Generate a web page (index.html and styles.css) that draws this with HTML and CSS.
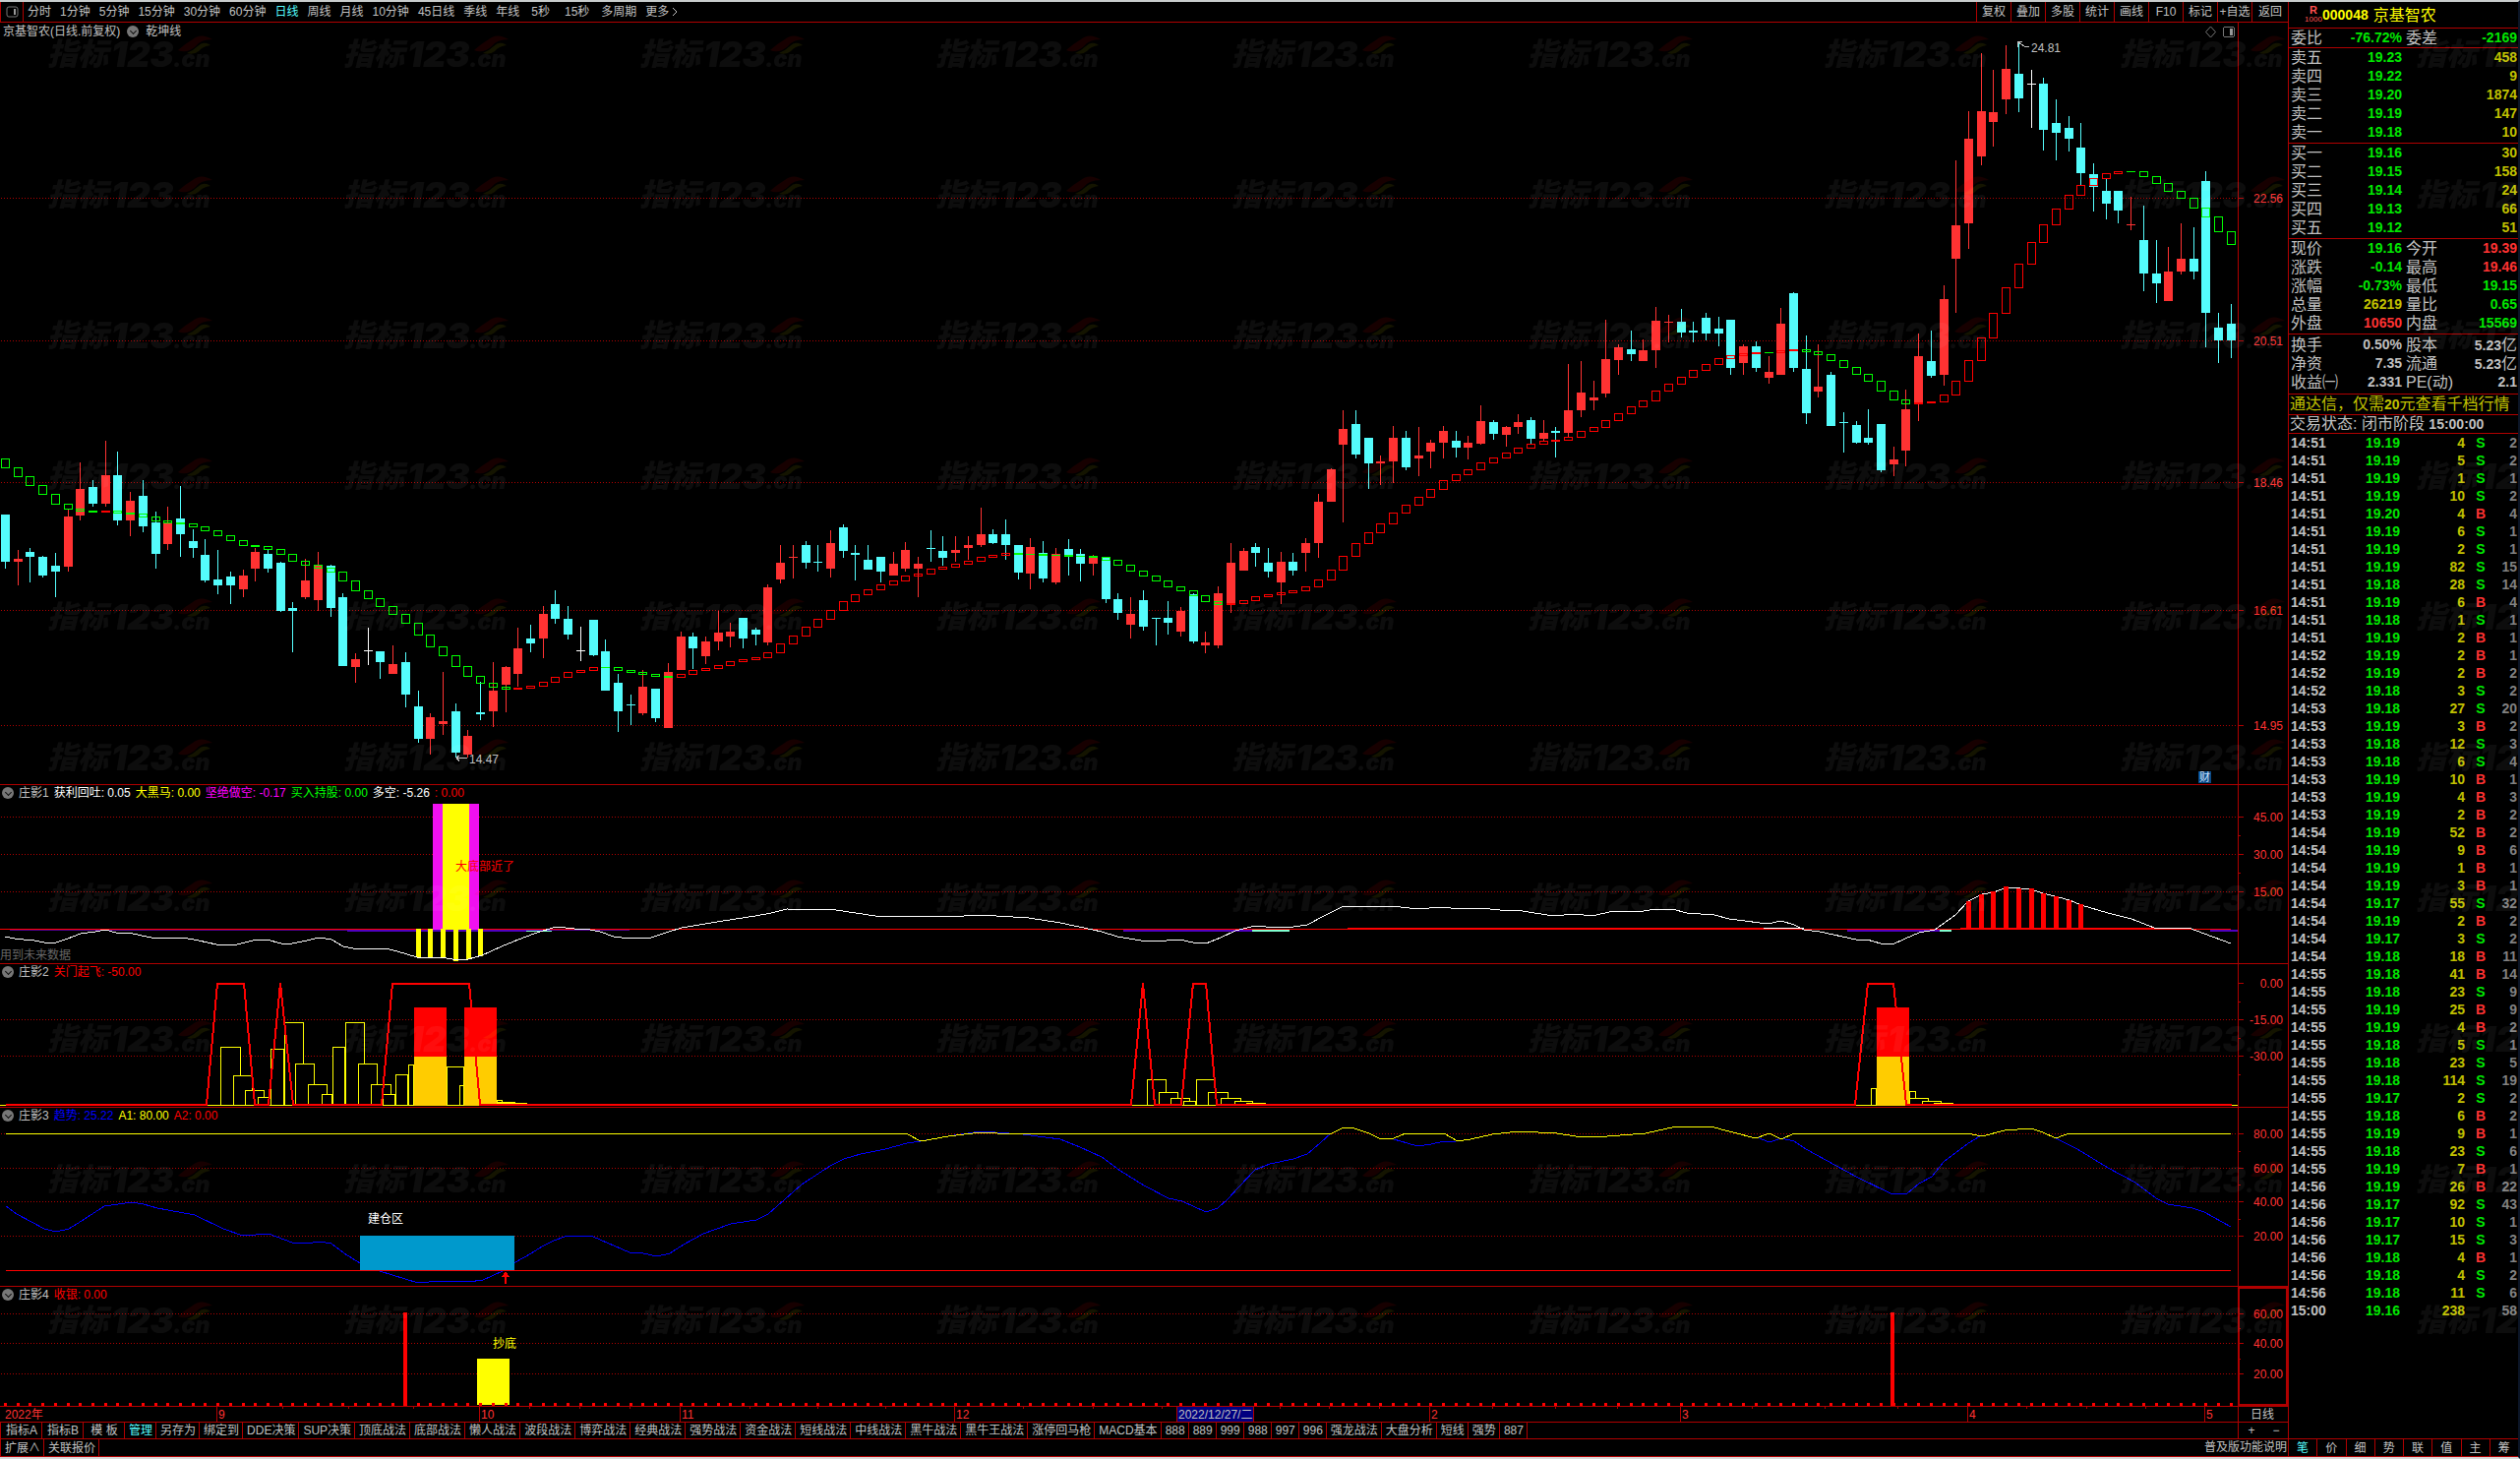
FILE: index.html
```html
<!DOCTYPE html>
<html lang="zh-CN">
<head>
<meta charset="utf-8">
<title>京基智农 000048</title>
<link rel="stylesheet" href="styles.css">
</head>
<body>
<div class="app">
  <main class="left">
    <nav class="toolbar">
      <button class="tool-icon" aria-label="侧栏"><svg width="13" height="12" viewBox="0 0 13 12"><rect x="1" y="1" width="11" height="10" rx="2" fill="none" stroke="#777"/><rect x="8" y="3" width="2" height="6" fill="#999"/></svg></button>
      <div class="periods">
        <button>分时</button><button>1分钟</button><button>5分钟</button><button>15分钟</button><button>30分钟</button><button>60分钟</button><button class="on">日线</button><button>周线</button><button>月线</button><button>10分钟</button><button>45日线</button><button>季线</button><button>年线</button><button class="sec">5秒</button><button class="sec">15秒</button><button>多周期</button><button class="more">更多<svg width="6" height="10" viewBox="0 0 6 10"><path d="M1 1L5 5L1 9" fill="none" stroke="#c0c0c0"/></svg></button>
      </div>
      <div class="actions">
        <button>复权</button><button>叠加</button><button>多股</button><button>统计</button><button>画线</button><button>F10</button><button>标记</button><button>+自选</button><button>返回</button>
      </div>
    </nav>

    <section class="panel">
      <header class="legend legend-main"><span>京基智农(日线.前复权)</span><i class="drop"></i><span>乾坤线</span></header>
      <svg id="price" class="chart" viewBox="0 23 2326 774"></svg>
    </section>
    <section class="panel">
      <header class="legend"><i class="drop"></i><span>庄影1</span><span class="white">获利回吐: 0.05</span><span class="yellow">大黑马: 0.00</span><span class="magenta">坚绝做空: -0.17</span><span class="green">买入持股: 0.00</span><span class="white">多空: -5.26</span><span class="red">: 0.00</span></header>
      <svg id="p1" class="chart" viewBox="0 798 2326 181"></svg>
    </section>
    <section class="panel">
      <header class="legend"><i class="drop"></i><span>庄影2</span><span class="red">关门起飞: -50.00</span></header>
      <svg id="p2" class="chart" viewBox="0 980 2326 145"></svg>
    </section>
    <section class="panel">
      <header class="legend"><i class="drop"></i><span>庄影3</span><span class="blue">趋势: 25.22</span><span class="yellow">A1: 80.00</span><span class="red">A2: 0.00</span></header>
      <svg id="p3" class="chart" viewBox="0 1126 2326 181"></svg>
    </section>
    <section class="panel">
      <header class="legend"><i class="drop"></i><span>庄影4</span><span class="red">收银: 0.00</span></header>
      <svg id="p4" class="chart" viewBox="0 1308 2326 121"></svg>
    </section>
    <section class="panel">
      <svg id="time" class="chart" viewBox="0 1430 2326 15"></svg>
    </section>

    <nav class="tabs">
      <button class="wide">指标A</button><button class="wide">指标B</button><button class="wide">模 板</button><button class="on">管理</button><button>另存为</button><button>绑定到</button><button>DDE决策</button><button>SUP决策</button><button>顶底战法</button><button>底部战法</button><button>懒人战法</button><button>波段战法</button><button>博弈战法</button><button>经典战法</button><button>强势战法</button><button>资金战法</button><button>短线战法</button><button>中线战法</button><button>黑牛战法</button><button>黑牛王战法</button><button>涨停回马枪</button><button>MACD基本</button><button>888</button><button>889</button><button>999</button><button>988</button><button>997</button><button>996</button><button>强龙战法</button><button>大盘分析</button><button>短线</button><button>强势</button><button>887</button>
      <div class="zoomers"><button>+</button><button>−</button></div>
    </nav>
    <footer class="tabs foot">
      <button>扩展∧</button><button>关联报价</button>
      <a class="help" href="#help">普及版功能说明</a>
    </footer>
  </main>

  <aside class="quote">
    <h1><span class="badge"><b>R</b><small>1000</small></span><strong>000048</strong><span>京基智农</span></h1>
    <table class="grid one">
      <tr><th>委比</th><td class="g">-76.72%</td><th>委差</th><td class="g">-2169</td></tr>
    </table>
    <table class="grid">
      <tr><th>卖五</th><td class="g">19.23</td><th></th><td class="y">458</td></tr>
      <tr><th>卖四</th><td class="g">19.22</td><th></th><td class="y">9</td></tr>
      <tr><th>卖三</th><td class="g">19.20</td><th></th><td class="y">1874</td></tr>
      <tr><th>卖二</th><td class="g">19.19</td><th></th><td class="y">147</td></tr>
      <tr><th>卖一</th><td class="g">19.18</td><th></th><td class="y">10</td></tr>
    </table>
    <table class="grid">
      <tr><th>买一</th><td class="g">19.16</td><th></th><td class="y">30</td></tr>
      <tr><th>买二</th><td class="g">19.15</td><th></th><td class="y">158</td></tr>
      <tr><th>买三</th><td class="g">19.14</td><th></th><td class="y">24</td></tr>
      <tr><th>买四</th><td class="g">19.13</td><th></th><td class="y">66</td></tr>
      <tr><th>买五</th><td class="g">19.12</td><th></th><td class="y">51</td></tr>
    </table>
    <table class="grid">
      <tr><th>现价</th><td class="g">19.16</td><th>今开</th><td class="r">19.39</td></tr>
      <tr><th>涨跌</th><td class="g">-0.14</td><th>最高</th><td class="r">19.46</td></tr>
      <tr><th>涨幅</th><td class="g">-0.73%</td><th>最低</th><td class="g">19.15</td></tr>
      <tr><th>总量</th><td class="y">26219</td><th>量比</th><td class="g">0.65</td></tr>
      <tr><th>外盘</th><td class="r">10650</td><th>内盘</th><td class="g">15569</td></tr>
    </table>
    <table class="grid last">
      <tr><th>换手</th><td>0.50%</td><th>股本</th><td>5.23<span>亿</span></td></tr>
      <tr><th>净资</th><td>7.35</td><th>流通</th><td>5.23<span>亿</span></td></tr>
      <tr><th>收益㈠</th><td>2.331</td><th>PE(动)</th><td>2.1</td></tr>
    </table>
    <p class="promo">通达信，仅需<b>20</b>元查看千档行情</p>
    <p class="status">交易状态: 闭市阶段 <b>15:00:00</b></p>
    <table class="ticks"><tbody id="ticks"></tbody></table>
    <nav class="modes"><button class="on">笔</button><button>价</button><button>细</button><button>势</button><button>联</button><button>值</button><button>主</button><button>筹</button></nav>
  </aside>

  <svg class="watermark" aria-hidden="true">
    <defs>
      <pattern id="wm" width="301" height="143" patternUnits="userSpaceOnUse">
        <g fill="#fff" fill-opacity=".05">
          <text class="wm-cjk" x="48" y="66">指标</text>
          <text class="wm-num" x="113" y="68">123</text>
          <text class="wm-cn" x="176" y="68">.cn</text>
        </g>
        <path d="M181 51Q189 44 196 40Q204 33 216 40Q204 40 199 47Q190 55 181 51Z" fill="#f00" fill-opacity=".09"/>
        <path d="M190 54Q197 51 201 47Q207 41 214 46Q206 47 202 52Q197 56 190 54Z" fill="#ff0" fill-opacity=".08"/>
      </pattern>
    </defs>
    <rect width="100%" height="1420" fill="url(#wm)"/>
  </svg>
</div>
<script src="app.js"></script>
</body>
</html>
```
FILE: styles.css
```css
* { box-sizing: border-box; }
body {
  margin: 0;
  background: #000;
  color: #c0c0c0;
  font: 12px/14px "Liberation Sans", "Noto Sans CJK SC", sans-serif;
}
button {
  font: inherit;
  color: inherit;
  background: none;
  border: 0;
  padding: 0;
  margin: 0;
  white-space: nowrap;
  cursor: pointer;
}
.app {
  position: relative;
  display: grid;
  grid-template-columns: minmax(0, 1fr) 234px;
  min-height: 100vh;
  border-top: 2px solid #c8cccc;
  border-bottom: 2px solid #d8dada;
  border-right: 2px solid #0b1526;
}
.left { display: flex; flex-direction: column; min-width: 0; }

/* top toolbar */
.toolbar {
  display: flex;
  height: 21px;
  border-bottom: 1px solid #b00000;
}
.tool-icon {
  width: 24px;
  border-left: 1px solid #b00000;
  border-right: 1px solid #b00000;
}
.tool-icon svg { display: block; margin: 0 auto; }
.periods { display: flex; padding-left: 4px; gap: 9px; }
.periods .sec { padding: 0 3px; }
.more { display: flex; align-items: center; gap: 3px; }
.on { color: #54fcfc; }
.actions { display: flex; margin-left: auto; }
.actions button { width: 35px; border-left: 1px solid #b00000; }
.actions button:last-child { width: 37px; }

/* chart panels */
.panel { display: grid; border-bottom: 1px solid #b00000; }
.chart { grid-area: 1 / 1; display: block; width: 100%; height: auto; shape-rendering: crispEdges; }
.legend {
  grid-area: 1 / 1;
  z-index: 1;
  align-self: start;
  display: flex;
  align-items: center;
  gap: 5px;
  height: 16px;
  padding-left: 2px;
  white-space: nowrap;
}
.legend-main { height: 18px; gap: 7px; padding-left: 3px; }
.drop {
  width: 12px;
  height: 12px;
  border-radius: 50%;
  background: #777;
  display: grid;
  place-items: center;
}
.drop::after {
  content: "";
  width: 4px;
  height: 4px;
  margin-top: -2px;
  border: solid #111;
  border-width: 0 1px 1px 0;
  transform: rotate(45deg);
}
.white { color: #fff; }
.yellow { color: #ff0; }
.magenta { color: #f0f; }
.green { color: #0f0; }
.red { color: #f00; }
.blue { color: #00f; }
.chart text { font-size: 12px; dominant-baseline: central; }
.axis-label { fill: #ff3232; }

/* indicator tabs */
.tabs { display: flex; height: 17px; border-bottom: 1px solid #b00000; border-left: 1px solid #b00000; }
.tabs button { padding: 0 3px 0 4px; border-right: 1px solid #b00000; }
.tabs .wide { width: 42px; }
.zoomers { display: flex; width: 51px; margin-left: auto; border-left: 1px solid #b00000; }
.zoomers button { flex: 1; border: 0; }
.foot { height: 18px; }
.help { margin-left: auto; padding-right: 1px; line-height: 17px; color: inherit; text-decoration: none; }

/* quote column */
.quote {
  display: flex;
  flex-direction: column;
  border-left: 1px solid #b00000;
  font-size: 16px;
  line-height: 19px;
}
.quote h1 {
  display: flex;
  align-items: center;
  height: 27px;
  margin: 0;
  padding-left: 16px;
  border-bottom: 1px solid #b00000;
  font-size: 16px;
  font-weight: 400;
  color: #ff0;
}
.quote h1 strong { font-size: 14px; margin-right: 5px; }
.badge { display: grid; justify-items: center; width: 18px; color: #ff5050; line-height: 9px; }
.badge b { font-size: 11px; }
.badge small { font-size: 8px; }
.grid, .ticks { width: 100%; table-layout: fixed; border-collapse: collapse; }
.grid { display: block; border-bottom: 1px solid #b00000; padding-bottom: 1px; }
.grid.one { padding-bottom: 0; }
.grid.last { padding: 1px 0 2px; }
.grid tr { display: grid; grid-template-columns: 52px 63px 50px 1fr; height: 19px; }
.grid tbody { display: block; }
.grid th { padding: 0 0 0 2px; font-weight: 400; text-align: left; white-space: nowrap; }
.grid th + td + th { padding-left: 4px; }
.grid td { padding: 0; font-size: 14px; font-weight: 700; text-align: right; white-space: nowrap; }
.grid td:last-child { padding-right: 1px; }
.grid td span { font-size: 16px; font-weight: 400; }
.g { color: #00e600; }
.y { color: #c0c000; }
.r { color: #ff3232; }
.quote p { margin: 0; padding-left: 1px; white-space: nowrap; border-bottom: 1px solid #b00000; }
.quote p b { font-size: 14px; }
.promo { height: 21px; color: #c0c000; }
.status { height: 19px; line-height: 17px; }
.ticks td { height: 18px; padding: 0; font-size: 14px; line-height: 18px; font-weight: 700; text-align: right; }
.ticks td:nth-child(1) { width: 56px; padding-left: 2px; text-align: left; }
.ticks td:nth-child(2) { width: 57px; }
.ticks td:nth-child(3) { width: 66px; }
.ticks td:nth-child(4) { width: 32px; text-align: center; }
.ticks td:nth-child(5) { padding-right: 1px; color: #808080; }
.modes {
  display: flex;
  height: 19px;
  margin-top: auto;
  border-top: 1px solid #b00000;
  border-bottom: 1px solid #b00000;
  font-size: 12px;
  line-height: 14px;
}
.modes button { flex: 1; border-right: 1px solid #b00000; }
.modes button:last-child { border-right: 0; }

/* site mark repeated over the whole window */
.watermark { position: absolute; top: -2px; left: 0; width: 100%; height: 100%; pointer-events: none; }
.watermark text { font-style: italic; font-weight: 900; }
.wm-cjk { font-size: 31px; font-family: "Noto Sans CJK SC", sans-serif; }
.wm-num { font-size: 36px; font-family: Inter, "Liberation Sans", sans-serif; }
.wm-cn { font-size: 23px; font-family: Inter, "Liberation Sans", sans-serif; }
```
FILE: app.js
```js
const RED = '#ff3232', CYAN = '#54fcfc', LINE = '#b00000';
const AXIS_X = 2275;

// one bar per trading day: kind, high, body top, body bottom, low
const bars = `c523,523,571,578 r559,568,571,595 c557,561,566,592 c565,566,585,587 c562,575,581,607 r518,525,576,581
r470,497,524,529 c488,495,512,515 r448,483,512,515 c459,483,529,534 r500,509,529,545 c488,504,535,541 c520,531,563,578
r515,532,553,559 c494,527,543,566 c538,550,557,567 c548,564,590,592 c559,589,595,604 c581,586,595,614 r579,585,599,607
r557,561,578,591 c559,563,578,582 c571,572,621,622 c612,618,621,663 r568,590,607,609 r561,575,610,621 c574,575,618,627
c603,607,677,677 r664,670,678,694 w638,661,662,676 c662,662,673,690 r656,675,685,685 c663,673,706,719 c702,718,751,755
r725,729,751,767 r683,733,736,747 c715,723,765,770 r742,748,767,770 c693,724,726,732 r673,702,723,739 r677,678,696,724
r638,659,685,698 c635,649,654,663 r616,624,649,669 c600,614,629,634 c616,629,645,650 w637,661,662,672 c630,630,666,667
c650,662,702,702 c685,694,723,744 c706,716,717,737 r681,698,725,727 c700,700,730,734 r674,683,740,740 r642,647,681,681
c643,647,659,680 r647,652,667,675 r621,643,652,661 r633,642,647,658 c628,628,649,659 c638,640,645,656 r594,597,653,656
r554,572,589,593 r554,566,567,588 c550,554,572,578 c554,571,572,581 r539,552,578,587 c533,536,560,567 c554,562,564,590
c554,569,579,579 c566,566,581,592 r561,573,585,585 r551,559,578,581 r566,573,578,607 c539,557,558,571 c545,560,567,575
r545,559,562,571 r545,554,557,569 r516,543,554,556 c538,543,552,553 c528,543,554,569 c554,554,582,589 r547,556,583,599
c550,562,588,592 r557,563,592,594 c548,558,566,585 c558,563,573,591 r564,566,573,585 c566,566,609,613 c603,609,623,630
r607,624,635,649 c600,610,637,641 c628,628,629,656 c611,628,633,645 r617,621,642,647 c603,604,652,654 r642,653,656,664
r596,603,656,659 r552,572,614,623 r557,560,580,580 c552,556,562,576 c557,572,581,587 r561,571,592,614 c562,571,580,585
r547,552,562,581 r502,510,552,567 r476,477,510,510 r417,436,452,531 c417,431,462,466 c445,445,471,497 r463,469,471,493
r433,445,469,491 c438,445,475,478 r434,463,466,484 r447,450,459,476 r433,438,450,466 c438,448,455,465 r443,450,455,467
r412,428,451,452 c427,429,441,447 r433,434,442,454 r421,429,434,441 c424,427,446,451 r427,440,446,449 c434,438,440,465
r370,417,440,444 r367,399,417,424 r387,404,407,417 r325,365,400,404 r350,353,366,381 c336,355,360,367 r345,356,367,367
r312,326,356,374 r320,327,328,348 c314,327,338,343 c327,336,338,348 c318,323,339,346 c322,334,339,352 c325,325,374,381
r350,352,369,381 c347,352,374,378 r362,378,384,390 r313,329,381,381 c297,298,374,378 c341,375,420,431 r350,393,398,404
c378,381,433,433 c419,429,430,460 c428,432,450,451 c416,445,450,452 c431,431,478,480 r454,467,472,484 r396,416,458,474
r339,362,411,428 c336,367,382,384 r290,304,381,392 r163,229,263,318 r113,141,227,253 r54,113,159,168 r71,114,124,149
r46,70,101,116 c43,75,100,114 w71,85,86,130 c79,85,132,153 c101,125,135,163 c118,130,141,154 c125,150,176,188
c166,177,190,215 c182,194,207,223 c194,194,214,227 r200,228,229,234 c209,244,278,296 c244,278,288,308 r251,276,306,306
r227,263,276,279 c231,263,276,284 c174,184,318,353 c318,333,346,369 c309,329,346,364`.split(/\s+/);

// trend line; each box spans the previous value to the current one
const trend = [466,
475,484,493,502,512,517,519,520,519,521,522,525,529,531,532,535,539,544,549,554,555,558,563,570,574,577,581,590,600,608,
616,624,633,645,657,666,677,687,694,698,700,699,697,693,688,683,681,678,678,681,683,685,687,688,685,681,679,676,672,670,
668,663,654,646,637,629,620,611,604,599,594,590,585,583,578,576,573,570,566,564,562,563,563,564,564,565,565,566,569,574,
580,585,590,596,600,605,611,614,613,610,606,604,602,600,596,589,579,565,552,541,532,521,513,505,497,488,482,477,470,465,
460,455,451,448,447,444,438,434,427,420,413,407,397,390,383,376,370,364,361,359,358,358,356,355,357,360,366,373,380,387,
397,406,410,409,408,401,387,366,343,318,292,268,246,228,212,198,188,181,176,174,174,179,186,194,201,211,220,235,248];

const NS = 'http://www.w3.org/2000/svg';
const $ = id => document.getElementById(id);
function add(svg, tag, attrs, text) {
  const n = document.createElementNS(NS, tag);
  for (const k in attrs) n.setAttribute(k, attrs[k]);
  if (text) n.textContent = text;
  svg.appendChild(n);
  return n;
}
const box = (svg, x1, y1, x2, y2, fill) => add(svg, 'rect', { x: x1, y: y1, width: x2 - x1, height: y2 - y1, fill });
const label = (svg, x, y, fill, text) => add(svg, 'text', { x, y, fill }, text);
const poly = (svg, pts, stroke, w = 1) => add(svg, 'polyline', { points: pts, fill: 'none', stroke, 'stroke-width': w });
const barX = i => Math.floor(5.5 + 12.713 * i);

function scale(svg, top, bottom, levels, minor = []) {
  for (const [y, text, plain] of levels) {
    if (!plain) add(svg, 'line', { x1: 1, x2: AXIS_X, y1: y + .5, y2: y + .5, stroke: LINE, 'stroke-dasharray': '1 2' });
    box(svg, AXIS_X, y, AXIS_X + 6, y + 1, LINE);
    add(svg, 'text', { x: 2321, y: y + 1, 'text-anchor': 'end', class: 'axis-label' }, text);
  }
  for (const y of minor) box(svg, AXIS_X, y, AXIS_X + 3, y + 1, LINE);
  box(svg, AXIS_X, top, AXIS_X + 1, bottom, LINE);
}

// price panel
const price = $('price');
scale(price, 23, 797, [[201, '22.56'], [346, '20.51'], [490, '18.46'], [620, '16.61'], [737, '14.95']]);
bars.forEach((b, i) => {
  const color = { c: CYAN, r: RED, w: '#fff' }[b[0]];
  const [hi, top, bot, lo] = b.slice(1).split(',').map(Number);
  const x = barX(i);
  box(price, x, hi, x + 1, lo, color);
  box(price, x - 4, top, x + 5, bot, color);
});
for (let i = 0; i < bars.length; i++) {
  const a = trend[i], b = trend[i + 1];
  add(price, 'rect', { x: barX(i) - 3.5, y: Math.min(a, b) + .5, width: 8, height: Math.abs(a - b) || 0.01, fill: 'none', stroke: b < a ? '#f00' : '#0f0' });
}
poly(price, '2052,43 2058,47 2063,47', '#c0c0c0');
poly(price, '2056,42 2051,43 2052,48', '#c0c0c0');
label(price, 2065, 49, '#c0c0c0', '24.81');
poly(price, '464,770.5 475,770.5', '#c0c0c0');
poly(price, '467,768 464,770 467,774', '#c0c0c0');
label(price, 477, 772, '#c0c0c0', '14.47');
add(price, 'path', { d: 'M2247.5 27L2252.5 32.5L2247.5 38L2242.5 32.5Z', fill: 'none', stroke: '#777', 'shape-rendering': 'auto' });
add(price, 'rect', { x: 2260.5, y: 27.5, width: 11, height: 10, rx: 2, fill: 'none', stroke: '#777' });
box(price, 2267, 29, 2270, 36, '#999');
box(price, 2235, 784, 2248, 796, '#0b4a86');
label(price, 2236, 790, '#cfe4ff', '财').style.fontSize = '11px';

// panel 1
const p1 = $('p1');
scale(p1, 798, 979, [[830, '45.00'], [868, '30.00'], [906, '15.00']], [849, 887]);
box(p1, 10, 945, 640, 946, '#500090');
box(p1, 353, 945, 560, 947, '#5000c0');
box(p1, 535, 946, 561, 947, '#80ffd0');
box(p1, 1142, 945, 1273, 947, '#5000c0');
box(p1, 1273, 945, 1311, 947, '#80ffd0');
box(p1, 1878, 945, 1972, 947, '#5000c0');
box(p1, 1972, 945, 1984, 947, '#80ffd0');
box(p1, 2247, 945, 2275, 947, '#5000c0');
box(p1, 0, 944, 2268, 945, '#f00');
box(p1, 1370, 943, 1832, 945, '#f00');
box(p1, 1993, 943, 2194, 945, '#f00');
box(p1, 440, 817, 487, 945, '#f010f0');
box(p1, 450, 817, 477, 945, '#ff0');
[[423, 973], [435, 973], [448, 973], [461, 977], [474, 975], [486, 972]].forEach(([x, y]) => box(p1, x, 944, x + 5, y, '#ff0'));
poly(p1, '5,952 15,954 24,955 35,956 45,958 57,958 69,954 82,949 97,947 107,945 118,948 135,949 149,952 159,954 186,953 202,956 220,960 241,960 257,956 271,955 286,959 297,959 312,956 324,953 337,955 349,962 359,964 392,964 404,967 424,973 449,973 465,976 476,975 490,971 510,962 527,955 543,949 565,942 584,944 600,945 610,947 624,952 640,954 662,953 680,947 693,943 735,936 768,931 784,928 800,924 850,925 890,931 980,931 997,930 1046,933 1078,938 1111,945 1120,947 1136,952 1160,956 1186,956 1199,955 1213,958 1226,959 1241,953 1256,946 1276,941 1287,942 1315,942 1329,940 1346,931 1366,921 1388,922 1416,921 1441,924 1466,922 1483,924 1505,923 1525,925 1548,926 1579,931 1602,929 1618,931 1641,926 1671,926 1684,924 1700,924 1715,928 1743,930 1758,934 1797,939 1811,936 1824,940 1834,945 1850,947 1887,955 1898,955 1912,959 1924,960 1937,954 1951,948 1967,945 1988,930 2001,916 2015,909 2027,907 2040,902 2054,903 2065,904 2077,908 2093,912 2104,915 2116,920 2143,928 2167,934 2190,943 2225,943 2241,949 2268,959', '#fff');
box(p1, 1793, 943, 1834, 944, '#fff');
[916, 909, 906, 901, 903, 903, 908, 911, 915, 919].forEach((y, k) => { const x = barX(157 + k); box(p1, x - 2, y, x + 3, 945, '#f00'); });
label(p1, 463, 881, '#f00', '大底部近了');
label(p1, 0, 971, '#666', '用到未来数据');

// panel 2
const p2 = $('p2');
scale(p2, 980, 1125, [[999, '0.00', true], [1036, '-15.00'], [1073, '-30.00']], [1018, 1055, 1092]);
box(p2, 0, 1123, 2275, 1124, '#ff0');
[[224, 245, 1064], [237, 257, 1093], [249, 269, 1108], [262, 276, 1115], [275, 289, 1066], [289, 309, 1039], [300, 320, 1081],
 [313, 333, 1102], [327, 338, 1112], [338, 351, 1064], [351, 371, 1039], [364, 384, 1081], [377, 398, 1102], [389, 402, 1112],
 [402, 415, 1092], [415, 421, 1082], [454, 472, 1084], [467, 472, 1103], [505, 511, 1118], [505, 524, 1120], [505, 536, 1121],
 [1166, 1186, 1097], [1178, 1198, 1110], [1190, 1210, 1116], [1203, 1216, 1119], [1216, 1236, 1097], [1228, 1249, 1110],
 [1241, 1262, 1116], [1255, 1274, 1119], [1267, 1287, 1121], [1902, 1908, 1106], [1941, 1948, 1109], [1941, 1961, 1116],
 [1954, 1974, 1119], [1966, 1986, 1121]]
  .forEach(([x1, x2, y]) => add(p2, 'rect', { x: x1 + .5, y: y + .5, width: x2 - x1 - 1, height: 1123 - y, fill: '#000', stroke: '#ff0' }));
[[421, 454], [472, 505], [1908, 1941]].forEach(([a, b]) => { box(p2, a, 1024, b, 1074, '#f00'); box(p2, a, 1074, b, 1124, '#fc0'); });
poly(p2, '6,1122.5 210,1122.5 221,999.5 248,999.5 259,1122.5 273,1122.5 285,999.5 298,1122.5 388,1122.5 399,999.5 477,999.5 488,1122.5 1150,1122.5 1162,999.5 1174,1122.5 1201,1122.5 1213,999.5 1226,999.5 1237,1122.5 1886,1122.5 1899,999.5 1925,999.5 1938,1122.5 2269,1122.5', '#f00', 2);

// panel 3
const p3 = $('p3');
scale(p3, 1126, 1307, [[1152, '80.00'], [1187, '60.00'], [1221, '40.00'], [1256, '20.00']], [1170, 1204, 1239]);
const BLUE = '#00f';
poly(p3, '6,1226 17,1234 32,1242 45,1249 57,1252 70,1249 83,1241 106,1226 134,1222 146,1224 160,1228 198,1235 227,1249 247,1256 273,1254 297,1263 311,1264 325,1262 337,1264 350,1274 366,1284 386,1292 425,1304 448,1302 476,1303 491,1301 511,1292 524,1283 540,1274 551,1267 563,1261 577,1256 603,1257 640,1273 654,1274 668,1277 681,1274 695,1265 715,1254 743,1244 769,1240 781,1234 798,1219 815,1204 844,1185 858,1178 875,1173 900,1168 922,1162 936,1160 964,1155 997,1150 1040,1153 1078,1158 1098,1166 1120,1176 1139,1190 1163,1205 1188,1218 1202,1221 1226,1232 1238,1228 1248,1219 1260,1206 1276,1189 1291,1183 1315,1178 1329,1173 1342,1162 1353,1152', BLUE);
poly(p3, '1417,1158 1431,1162 1441,1165 1455,1163 1468,1160 1480,1160', BLUE);
poly(p3, '1786,1156 1799,1161 1811,1157 1824,1160 1836,1168 1887,1196 1924,1214 1939,1213 1951,1203 1964,1196 1976,1181 2001,1162 2013,1155', BLUE);
poly(p3, '2090,1157 2112,1168 2143,1187 2171,1202 2192,1218 2204,1224 2229,1228 2241,1232 2268,1247', BLUE);
poly(p3, '6,1152.5 922,1152.5 936,1160 964,1155 997,1151 1023,1152.5 1346,1152.5 1352,1153 1366,1146 1377,1147 1392,1152 1402,1157 1417,1157 1429,1152 1468,1152 1482,1160 1495,1158 1517,1153 1544,1150 1583,1152 1602,1155 1634,1155 1673,1152 1704,1145 1739,1145 1758,1150 1785,1157 1799,1152 1811,1158 1823,1152.5 2003,1152.5 2015,1155 2038,1149 2065,1147 2077,1151 2090,1157 2102,1152.5 2268,1152.5', '#ff0');
box(p3, 366, 1256, 523, 1291, '#0099cc');
box(p3, 6, 1291, 2268, 1292, '#f00');
add(p3, 'path', { d: 'M514 1292L518 1298L515 1298L515 1305L513 1305L513 1298L510 1298Z', fill: '#f00' });
label(p3, 374, 1239, '#fff', '建仓区');

// panel 4
const p4 = $('p4');
scale(p4, 1308, 1429, [[1335, '60.00'], [1365, '40.00'], [1396, '20.00']], [1350, 1381]);
box(p4, 485, 1381, 518, 1428, '#ff0');
bars.forEach((b, i) => { const x = barX(i); box(p4, x - 1, 1426, x + 2, 1429, '#f00'); });
box(p4, 410, 1334, 414, 1429, '#f00');
box(p4, 1922, 1334, 1926, 1429, '#f00');
label(p4, 501, 1366, '#ff0', '抄底');
add(p4, 'rect', { x: 2276, y: 1309, width: 49, height: 119, fill: 'none', stroke: '#b00000', 'stroke-width': 2 });

// time axis
const time = $('time');
[287, 354, 420, 538, 589, 640, 762, 831, 900, 1040, 1111, 1181, 1301, 1351, 1402, 1517, 1581, 1644, 1781, 1855, 1929, 2060, 2121, 2181]
  .forEach(x => box(time, x, 1430, x + 1, 1432, LINE));
label(time, 5, 1438, RED, '2022年');
[[220, '9'], [487, '10'], [691, '11'], [970, '12'], [1453, '2'], [1708, '3'], [2000, '4'], [2241, '5']].forEach(([x, t]) => {
  box(time, x, 1430, x + 1, 1445, LINE);
  label(time, x + 2, 1438, RED, t);
});
box(time, 1196, 1430, 1275, 1445, '#000080');
box(time, 1196, 1430, 1197, 1445, LINE);
box(time, 1274, 1430, 1275, 1445, LINE);
label(time, 1198, 1438, '#c0c0c0', '2022/12/27/二');
box(time, AXIS_X, 1430, AXIS_X + 1, 1445, LINE);
label(time, 2288, 1438, '#c0c0c0', '日线');

// trades: minute, price, volume, side, count
const trades = {
  '14:51': '19.19 4 S 2,19.19 5 S 2,19.19 1 S 1,19.19 10 S 2,19.20 4 B 4,19.19 6 S 1,19.19 2 S 1,19.19 82 S 15,19.18 28 S 14,19.19 6 B 4,19.18 1 S 1,19.19 2 B 1',
  '14:52': '19.19 2 B 1,19.19 2 B 2,19.18 3 S 2',
  '14:53': '19.18 27 S 20,19.19 3 B 2,19.18 12 S 3,19.18 6 S 4,19.19 10 B 1,19.19 4 B 3,19.19 2 B 2',
  '14:54': '19.19 52 B 2,19.19 9 B 6,19.19 1 B 1,19.19 3 B 1,19.17 55 S 32,19.19 2 B 2,19.17 3 S 2,19.18 18 B 11',
  '14:55': '19.18 41 B 14,19.18 23 S 9,19.19 25 B 9,19.19 4 B 2,19.18 5 S 1,19.18 23 S 5,19.18 114 S 19,19.17 2 S 2,19.18 6 B 2,19.19 9 B 1,19.18 23 S 6,19.19 7 B 1',
  '14:56': '19.19 26 B 22,19.17 92 S 43,19.17 10 S 1,19.17 15 S 3,19.18 4 B 1,19.18 4 S 2,19.18 11 S 6',
  '15:00': '19.16 238  58',
};
for (const t in trades) for (const row of trades[t].split(',')) {
  const [p, v, side, n] = row.split(' ');
  $('ticks').insertAdjacentHTML('beforeend',
    `<tr><td>${t}</td><td class="g">${p}</td><td class="y">${v}</td><td class="${side === 'B' ? 'r' : 'g'}">${side}</td><td>${n}</td></tr>`);
}
```
